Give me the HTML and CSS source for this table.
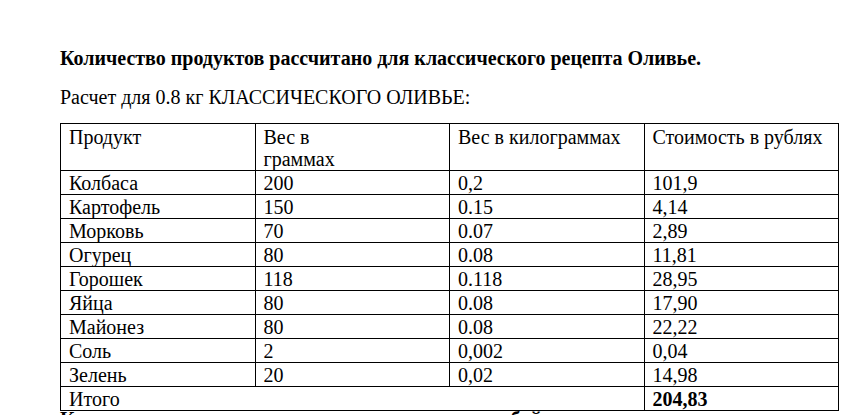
FILE: index.html
```html
<!DOCTYPE html>
<html lang="ru">
<head>
<meta charset="utf-8">
<link rel="stylesheet" href="styles.css">
</head>
<body>
<div class="page">
  <p class="title">Количество продуктов рассчитано для классического рецепта Оливье.</p>
  <p class="subtitle">Расчет для 0.8 кг КЛАССИЧЕСКОГО ОЛИВЬЕ:</p>
  <table class="calc">
    <colgroup>
      <col class="c1"><col class="c2"><col class="c3"><col class="c4">
    </colgroup>
    <tr class="head">
      <td>Продукт</td>
      <td>Вес в<br>граммах</td>
      <td>Вес в килограммах</td>
      <td>Стоимость в рублях</td>
    </tr>
    <tr><td>Колбаса</td><td>200</td><td>0,2</td><td>101,9</td></tr>
    <tr><td>Картофель</td><td>150</td><td>0.15</td><td>4,14</td></tr>
    <tr><td>Морковь</td><td>70</td><td>0.07</td><td>2,89</td></tr>
    <tr><td>Огурец</td><td>80</td><td>0.08</td><td>11,81</td></tr>
    <tr><td>Горошек</td><td>118</td><td>0.118</td><td>28,95</td></tr>
    <tr><td>Яйца</td><td>80</td><td>0.08</td><td>17,90</td></tr>
    <tr><td>Майонез</td><td>80</td><td>0.08</td><td>22,22</td></tr>
    <tr><td>Соль</td><td>2</td><td>0,002</td><td>0,04</td></tr>
    <tr><td>Зелень</td><td>20</td><td>0,02</td><td>14,98</td></tr>
    <tr><td colspan="3">Итого</td><td class="total">204,83</td></tr>
  </table>
  <p class="after">Конечная цена салата составит меньше, чем в любой кулинарии.</p>
</div>
</body>
</html>
```
FILE: styles.css
```css
html, body {
  margin: 0;
  padding: 0;
  background: #ffffff;
}
body {
  font-family: "Liberation Serif", "Times New Roman", serif;
  color: #000000;
  overflow: hidden;
}
.page {
  padding: 48px 0 0 60px;
  height: 367px;
  overflow: hidden;
}
.title {
  margin: 0;
  font-size: 20px;
  font-weight: bold;
  line-height: 20px;
}
.subtitle {
  margin: 19px 0 0;
  font-size: 20px;
  line-height: 20px;
}
.calc {
  margin-top: 16px;
  border-collapse: collapse;
  table-layout: fixed;
  width: 779px;
  font-size: 20px;
  line-height: 21px;
}
.c1, .c2, .c3, .c4 { width: 194px; }
.calc td {
  border: 1px solid #000000;
  padding: 2px 6px 0 8px;
  vertical-align: top;
  white-space: nowrap;
}
.calc .head td {
  height: 44px;
  line-height: 22px;
  padding-top: 2px;
  padding-bottom: 0;
}
.calc .total {
  font-weight: bold;
}
.after {
  margin: -2px 0 0;
  font-size: 20px;
  font-weight: bold;
  line-height: 20px;
  white-space: nowrap;
}
```
